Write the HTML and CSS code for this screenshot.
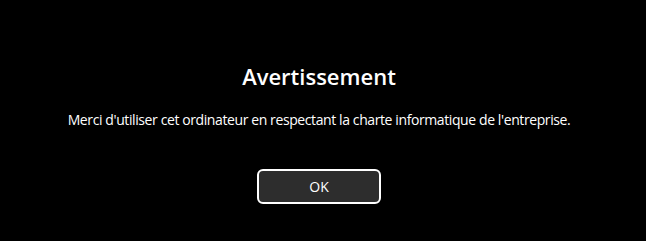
FILE: index.html
```html
<!DOCTYPE html>
<html lang="fr">
<head>
    <meta charset="UTF-8">
    <meta name="viewport" content="width=device-width, initial-scale=1.0">
    <title>Avertissement</title>
    <link rel="stylesheet" href="styles.css">
</head>
<body>
    <div class="dialog">
        <h1 class="title">Avertissement</h1>
        <p class="message">Merci d'utiliser cet ordinateur en respectant la charte informatique de l'entreprise.</p>
        <button class="ok-btn">OK</button>
    </div>
</body>
</html>
```

FILE: styles.css
```css
body {
    margin: 0;
    background-color: #000;
    color: #fff;
    font-family: 'Open Sans', 'Noto Sans', sans-serif;
    height: 100vh;
}

.dialog {
    width: 638px;
    display: flex;
    flex-direction: column;
    align-items: center;
    padding-top: 61px;
}

.title {
    margin: 0;
    font-size: 22px;
    line-height: 30px;
    font-weight: 600;
}

.message {
    margin: 19px 0 0;
    font-size: 14px;
    line-height: 20px;
    letter-spacing: -0.4px;
}

.ok-btn {
    margin-top: 39px;
    width: 124px;
    height: 35px;
    background-color: #2d2d2d;
    color: #fff;
    border: 2px solid #fff;
    border-radius: 6px;
    font-family: inherit;
    font-size: 14px;
    cursor: pointer;
}
```
